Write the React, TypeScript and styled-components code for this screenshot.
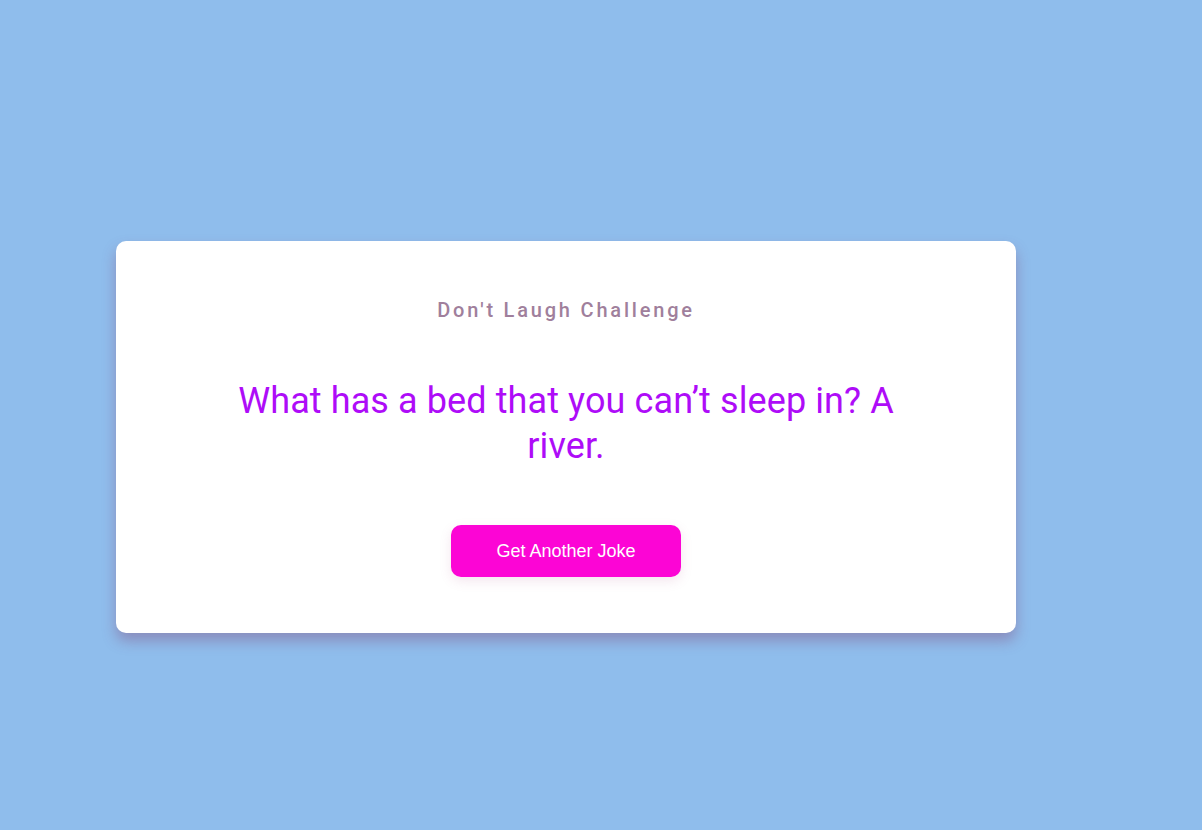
import React from "react";
import styled, { createGlobalStyle } from "styled-components";

const GlobalStyle = createGlobalStyle`
  html, body {
    margin: 0;
    padding: 0;
    background: #8fbdec;
  }
  * { box-sizing: border-box; }
`;

const Page = styled.main`
  min-height: 100vh;
  background: #8fbdec;
  display: flex;
  align-items: flex-start;
  padding: 241px 0 0 116px;
`;

const Card = styled.section`
  width: 900px;
  height: 392px;
  background: #ffffff;
  border-radius: 10px;
  box-shadow: 0 8px 14px rgba(130, 70, 120, 0.4);
  display: flex;
  flex-direction: column;
  align-items: center;
  padding-top: 57px;
`;

const Title = styled.h3`
  margin: 0;
  font-family: Roboto, "Liberation Sans", sans-serif;
  font-weight: 500;
  font-size: 20px;
  letter-spacing: 2.8px;
  line-height: 24px;
  color: #a07f9c;
`;

const Joke = styled.p`
  margin: 57px 0 0;
  width: 700px;
  text-align: center;
  font-family: Roboto, "Liberation Sans", sans-serif;
  font-weight: 400;
  font-size: 36px;
  line-height: 45px;
  letter-spacing: 0.1px;
  color: #ae0cf8;
`;

const Button = styled.button`
  margin-top: 56px;
  width: 230px;
  height: 52px;
  border: none;
  border-radius: 10px;
  background: #fc05d5;
  color: #ffffff;
  font-family: "Liberation Sans", Arial, sans-serif;
  font-size: 18px;
  cursor: pointer;
  box-shadow: 0 4px 12px rgba(180, 90, 140, 0.15);
`;

export default function App() {
  return (
    <>
      <GlobalStyle />
      <Page>
        <Card>
          <Title>Don't Laugh Challenge</Title>
          <Joke>What has a bed that you can’t sleep in? A river.</Joke>
          <Button>Get Another Joke</Button>
        </Card>
      </Page>
    </>
  );
}
